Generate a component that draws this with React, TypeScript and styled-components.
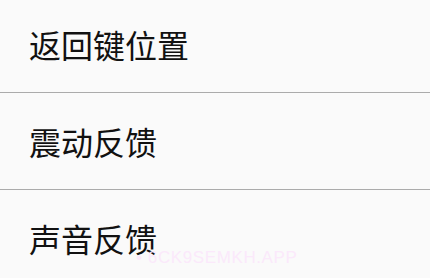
import React from "react";
import styled, { createGlobalStyle } from "styled-components";

const Global = createGlobalStyle`
  html, body { margin: 0; padding: 0; background: #fafafa; }
  body { width: 430px; height: 278px; overflow: hidden; }
`;

const Page = styled.div`
  position: relative;
  width: 430px;
  height: 278px;
  overflow: hidden;
  background: #fafafa;
`;

const List = styled.ul`
  list-style: none;
  margin: -4px 0 0;
  padding: 0;
`;

const Row = styled.li`
  display: flex;
  align-items: center;
  height: 96px;
  padding-left: 29px;
  border-bottom: 1px solid #ababab;
  font-family: "Noto Sans CJK SC", "Noto Sans", sans-serif;
  font-size: 32px;
  color: #111;
  &:last-child { border-bottom: none; }
`;

const Watermark = styled.div`
  position: absolute;
  left: 136px;
  top: 248px;
  font-family: "Liberation Sans", Arial, sans-serif;
  font-size: 17px;
  letter-spacing: 0.6px;
  color: #fbe9fb;
  white-space: nowrap;
  pointer-events: none;
`;

const items = ["返回键位置", "震动反馈", "声音反馈"];

export default function App() {
  return (
    <Page>
      <Global />
      <List>
        {items.map((t) => (
          <Row key={t}>{t}</Row>
        ))}
      </List>
      <Watermark>• 6CK9SEMKH.APP</Watermark>
    </Page>
  );
}
